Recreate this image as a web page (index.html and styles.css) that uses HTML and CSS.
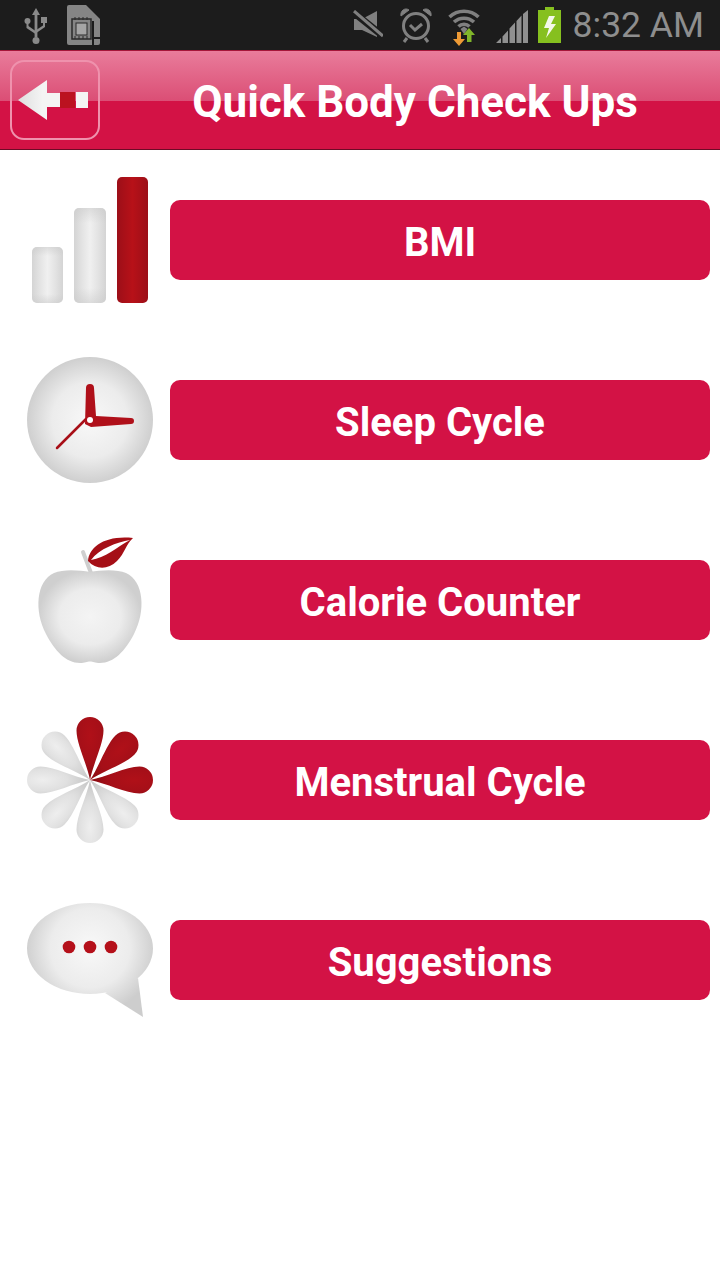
FILE: index.html
```html
<!DOCTYPE html>
<html lang="en">
<head>
<meta charset="utf-8">
<title>Quick Body Check Ups</title>
<link rel="stylesheet" href="styles.css">
</head>
<body>
<div class="status">
  <div class="status-left">
    <svg class="st-usb" width="24" height="36" viewBox="0 0 24 36" fill="#8a8a8a">
      <path d="M12 0l4 7h-2.600v22h-2.800V7H8z"/>
      <circle cx="12" cy="32.500" r="3.500"/>
      <circle cx="3.500" cy="13" r="3"/>
      <rect x="17" y="9" width="6" height="6"/>
      <path d="M2.500 14h2v4l7 5v3l-9-6zM19 14h2v5l-8 5.500v-3l6-4z"/>
    </svg>
    <svg class="st-sd" width="35" height="40" viewBox="0 0 35 40">
      <path d="M0 2a2 2 0 0 1 2-2h17l14 14v24a2 2 0 0 1-2 2H2a2 2 0 0 1-2-2z" fill="#858585"/>
      <rect x="25" y="16" width="2" height="24" fill="#1c1c1c"/>
      <rect x="26.500" y="32" width="7" height="2" fill="#1c1c1c"/>
      <rect x="5" y="14" width="19" height="20" fill="none" stroke="#2a2a2a" stroke-width="1.500"/>
      <rect x="9" y="18" width="11" height="12" fill="#a5a5a5" stroke="#2a2a2a"/>
      <path d="M8 12v22M12 12v22M16 12v22M20 12v22" stroke="#2a2a2a" stroke-width="1" stroke-dasharray="3 16"/>
    </svg>
  </div>
  <div class="status-right">
    <svg class="st-mute" width="30" height="30" viewBox="0 0 30 30" fill="#808080">
      <path d="M1 9h8L24 1v26L9 20H1z"/>
      <path d="M0 2l30 24" stroke="#1c1c1c" stroke-width="7"/>
      <path d="M1 1l29 25" stroke="#808080" stroke-width="3"/>
    </svg>
    <svg class="st-alarm" width="32" height="36" viewBox="0 0 32 36" fill="none" stroke="#808080">
      <circle cx="16" cy="19" r="12.500" stroke-width="3"/>
      <path d="M10 18l5 5 7-6" stroke-width="3"/>
      <path d="M1 9c-1-5 4-9 8-6zM31 9c1-5-4-9-8-6z" fill="#808080" stroke-width="1"/>
      <path d="M7 31l-3 4M25 31l3 4" stroke-width="3"/>
    </svg>
    <svg class="st-wifi" width="32" height="38" viewBox="0 0 32 38" fill="none" stroke="#808080" stroke-width="3.600">
      <path d="M1.500 8a21 21 0 0 1 29 0"/>
      <path d="M6 13a15 15 0 0 1 20 0"/>
      <path d="M10.500 17.500a8 8 0 0 1 11 0"/>
      <path d="M12.500 20l3.500-2.500 3.500 2.500-3.500 5z" fill="#808080" stroke="none"/>
      <path d="M13 23v7h4l-6 7-6-7h4v-7z" fill="#ee9a35" stroke="none"/>
      <path d="M21 19l6 7h-3.500v7h-4.500v-7h-4z" fill="#80b62a" stroke="none"/>
    </svg>
    <svg class="st-signal" width="32" height="33" viewBox="0 0 32 33" fill="#909090">
      <path d="M0 33l5-5v5zM6.500 33V26.500l5.500-6v12.500zM13.500 33V18.500l5.500-6v20.500zM20.500 33V11l5-5.500v27.500zM27 33V4l5-4v33z"/>
    </svg>
    <svg class="st-batt" width="23" height="36" viewBox="0 0 23 36">
      <path d="M7 0h9v3h7v33H0V3h7z" fill="#86c01f"/>
      <path d="M11 9h6l-4 8h5L8 31l3-10H6z" fill="#f4f8ea"/>
    </svg>
    <span class="clock">8:32 AM</span>
  </div>
</div>

<header class="bar">
  <button class="back" type="button" aria-label="Back">
    <svg width="72" height="42" viewBox="0 0 72 42">
      <defs>
        <linearGradient id="arrow" x1="0" y1="0" x2="1" y2="0">
          <stop offset="0" stop-color="#dedede"/><stop offset=".35" stop-color="#f4f4f4"/><stop offset="1" stop-color="#f4f4f4"/>
        </linearGradient>
      </defs>
      <path d="M0 21L29 1v13h13v14H29v13zM58 13h12v16H58z" fill="url(#arrow)"/>
      <rect x="42" y="13" width="15" height="16" fill="#bb1220"/>
    </svg>
  </button>
  <h1 class="title">Quick Body Check Ups</h1>
</header>

<main class="list">
  <div class="row">
    <svg class="ico" width="126" height="126" viewBox="0 0 126 126">
      <defs>
        <linearGradient id="g1"><stop offset="0" stop-color="#d4d4d4"/><stop offset=".25" stop-color="#e3e3e3"/><stop offset=".5" stop-color="#f0f0f0"/><stop offset=".75" stop-color="#e3e3e3"/><stop offset="1" stop-color="#d4d4d4"/></linearGradient>
        <linearGradient id="g1v" x1="0" y1="0" x2="0" y2="1"><stop offset="0" stop-color="#c8c8c8" stop-opacity=".5"/><stop offset=".16" stop-color="#c8c8c8" stop-opacity="0"/><stop offset=".84" stop-color="#c8c8c8" stop-opacity="0"/><stop offset="1" stop-color="#c8c8c8" stop-opacity=".5"/></linearGradient>
        <linearGradient id="r1"><stop offset="0" stop-color="#9c0f18"/><stop offset=".5" stop-color="#b71118"/><stop offset="1" stop-color="#9c0f18"/></linearGradient>
      </defs>
      <rect x="5" y="70" width="31" height="56" rx="5" fill="url(#g1)"/>
      <rect x="5" y="70" width="31" height="56" rx="5" fill="url(#g1v)"/>
      <rect x="47" y="31" width="32" height="95" rx="5" fill="url(#g1)"/>
      <rect x="47" y="31" width="32" height="95" rx="5" fill="url(#g1v)"/>
      <rect x="90" y="0" width="31" height="126" rx="5" fill="url(#r1)"/>
    </svg>
    <a class="btn">BMI</a>
  </div>
  <div class="row">
    <svg class="ico" width="126" height="126" viewBox="0 0 126 126">
      <defs>
        <radialGradient id="g2"><stop offset="0" stop-color="#f8f8f8"/><stop offset=".6" stop-color="#ececec"/><stop offset="1" stop-color="#cfcfcf"/></radialGradient>
      </defs>
      <circle cx="63" cy="63" r="63" fill="url(#g2)"/>
      <path d="M59 62L30 91" stroke="#a80f18" stroke-width="2.500" stroke-linecap="round" fill="none"/>
      <path d="M59 31a4 4 0 0 1 8 0l2 28 35 2a3 3 0 0 1 0 6l-40 3-6-3z" fill="#b0101a"/>
      <circle cx="63" cy="63" r="3" fill="#fff"/>
    </svg>
    <a class="btn">Sleep Cycle</a>
  </div>
  <div class="row">
    <svg class="ico" width="126" height="126" viewBox="0 0 126 126">
      <defs>
        <radialGradient id="g3"><stop offset="0" stop-color="#f4f4f4"/><stop offset=".6" stop-color="#ececec"/><stop offset="1" stop-color="#cfcfcf"/></radialGradient>
      </defs>
      <path d="M64 36L56 15" stroke="#cfcfcf" stroke-width="4" stroke-linecap="round" fill="none"/>
      <path d="M63 35C52 33 36 32 27 36 9 44 7 74 19 97c9 17 20 29 34 29 5 0 7-1.500 10-1.500s5 1.500 10 1.500c14 0 25-12 34-29 12-23 10-53-8-61-9-4-25-3-36-1z" fill="url(#g3)"/>
      <path d="M61 24C62 10 78-2 106 1 99 7 98 16 90 24 81 33 69 33 61 24z" fill="#a50f16"/>
      <path d="M64 23C78 21 90 10 103 3 90 5 72 12 64 23z" fill="#fff"/>
    </svg>
    <a class="btn">Calorie Counter</a>
  </div>
  <div class="row">
    <svg class="ico" width="126" height="126" viewBox="0 0 126 126">
      <defs>
        <radialGradient id="g4" cx=".5" cy=".25" r=".65"><stop offset="0" stop-color="#eeeeee"/><stop offset=".6" stop-color="#e0e0e0"/><stop offset="1" stop-color="#cccccc"/></radialGradient>
        <radialGradient id="r4" cx=".5" cy=".3" r=".6"><stop offset="0" stop-color="#b01018"/><stop offset=".7" stop-color="#a50f18"/><stop offset="1" stop-color="#900d14"/></radialGradient>
        <path id="petal" d="M0 0C-3-16-13.500-36-13.500-49.500A13.500 13.500 0 0 1 13.500-49.500C13.500-36 3-16 0 0Z"/>
      </defs>
      <g transform="translate(63 63)">
        <use href="#petal" fill="url(#g4)" transform="rotate(135)"/>
        <use href="#petal" fill="url(#g4)" transform="rotate(180)"/>
        <use href="#petal" fill="url(#g4)" transform="rotate(225)"/>
        <use href="#petal" fill="url(#g4)" transform="rotate(270)"/>
        <use href="#petal" fill="url(#g4)" transform="rotate(315)"/>
        <use href="#petal" fill="url(#r4)"/>
        <use href="#petal" fill="url(#r4)" transform="rotate(45)"/>
        <use href="#petal" fill="url(#r4)" transform="rotate(90)"/>
      </g>
    </svg>
    <a class="btn">Menstrual Cycle</a>
  </div>
  <div class="row">
    <svg class="ico" width="126" height="126" viewBox="0 0 126 126">
      <defs>
        <radialGradient id="g5" cx="63" cy="51" r="66" gradientUnits="userSpaceOnUse"><stop offset="0" stop-color="#f8f8f8"/><stop offset=".6" stop-color="#ececec"/><stop offset="1" stop-color="#cdcdcd"/></radialGradient>
      </defs>
      <path d="M111 81L116 120 78 96z" fill="url(#g5)"/>
      <ellipse cx="63" cy="51.500" rx="63" ry="45.500" fill="url(#g5)"/>
      <circle cx="42" cy="50" r="6.300" fill="#b5101a"/>
      <circle cx="63" cy="50" r="6.300" fill="#b5101a"/>
      <circle cx="84" cy="50" r="6.300" fill="#b5101a"/>
    </svg>
    <a class="btn">Suggestions</a>
  </div>
</main>
</body>
</html>
```

FILE: styles.css
```css
* { box-sizing: border-box; }
html, body { margin: 0; padding: 0; }
body { width: 720px; height: 1280px; background: #fff; font-family: Roboto, "Liberation Sans", sans-serif; overflow: hidden; }

.status { height: 50px; background: #1c1c1c; display: flex; align-items: center; justify-content: space-between; padding: 0 16px 0 24px; }
.status-left { display: flex; align-items: center; gap: 19px; height: 100%; }
.status-right { display: flex; align-items: center; height: 100%; }
.st-usb { margin-top: 2px; }
.st-sd { margin-top: -1px; }
.st-mute { margin-right: 17px; }
.st-alarm { margin-right: 16px; }
.st-wifi { margin-right: 16px; margin-top: 6px; }
.st-signal { margin-right: 10px; margin-top: 2px; }
.st-batt { margin-right: 12px; }
.clock { font-family: Roboto, sans-serif; font-size: 35.500px; color: #8e8e8e; line-height: 50px; }

.bar { height: 100px; display: flex; align-items: center; gap: 10px; padding-left: 10px; border-top: 1px solid #a5163a; border-bottom: 1px solid #6d0a26;
  background: linear-gradient(to bottom, #e97c9b 0, #db4e75 50px, #d31245 50px, #d31245 100%); }
.back { width: 90px; height: 80px; border: 2px solid #ef92ad; border-radius: 14px; background: none; padding: 0 2px 0 0; display: flex; align-items: center; justify-content: center; }
.title { flex: 1; margin: 0; padding-top: 4px; text-align: center; color: #fff; font-size: 44px; font-weight: 700; line-height: 1; }

.list { display: flex; flex-direction: column; }
.row { height: 180px; display: flex; align-items: center; padding: 0 10px 0 27px; gap: 17px; }
.ico { flex: none; display: block; }
.btn { flex: 1; height: 80px; padding-top: 4px; border-radius: 10px; background: #d31245; color: #fff; font-size: 40px; font-weight: 700; display: flex; align-items: center; justify-content: center; }
```
